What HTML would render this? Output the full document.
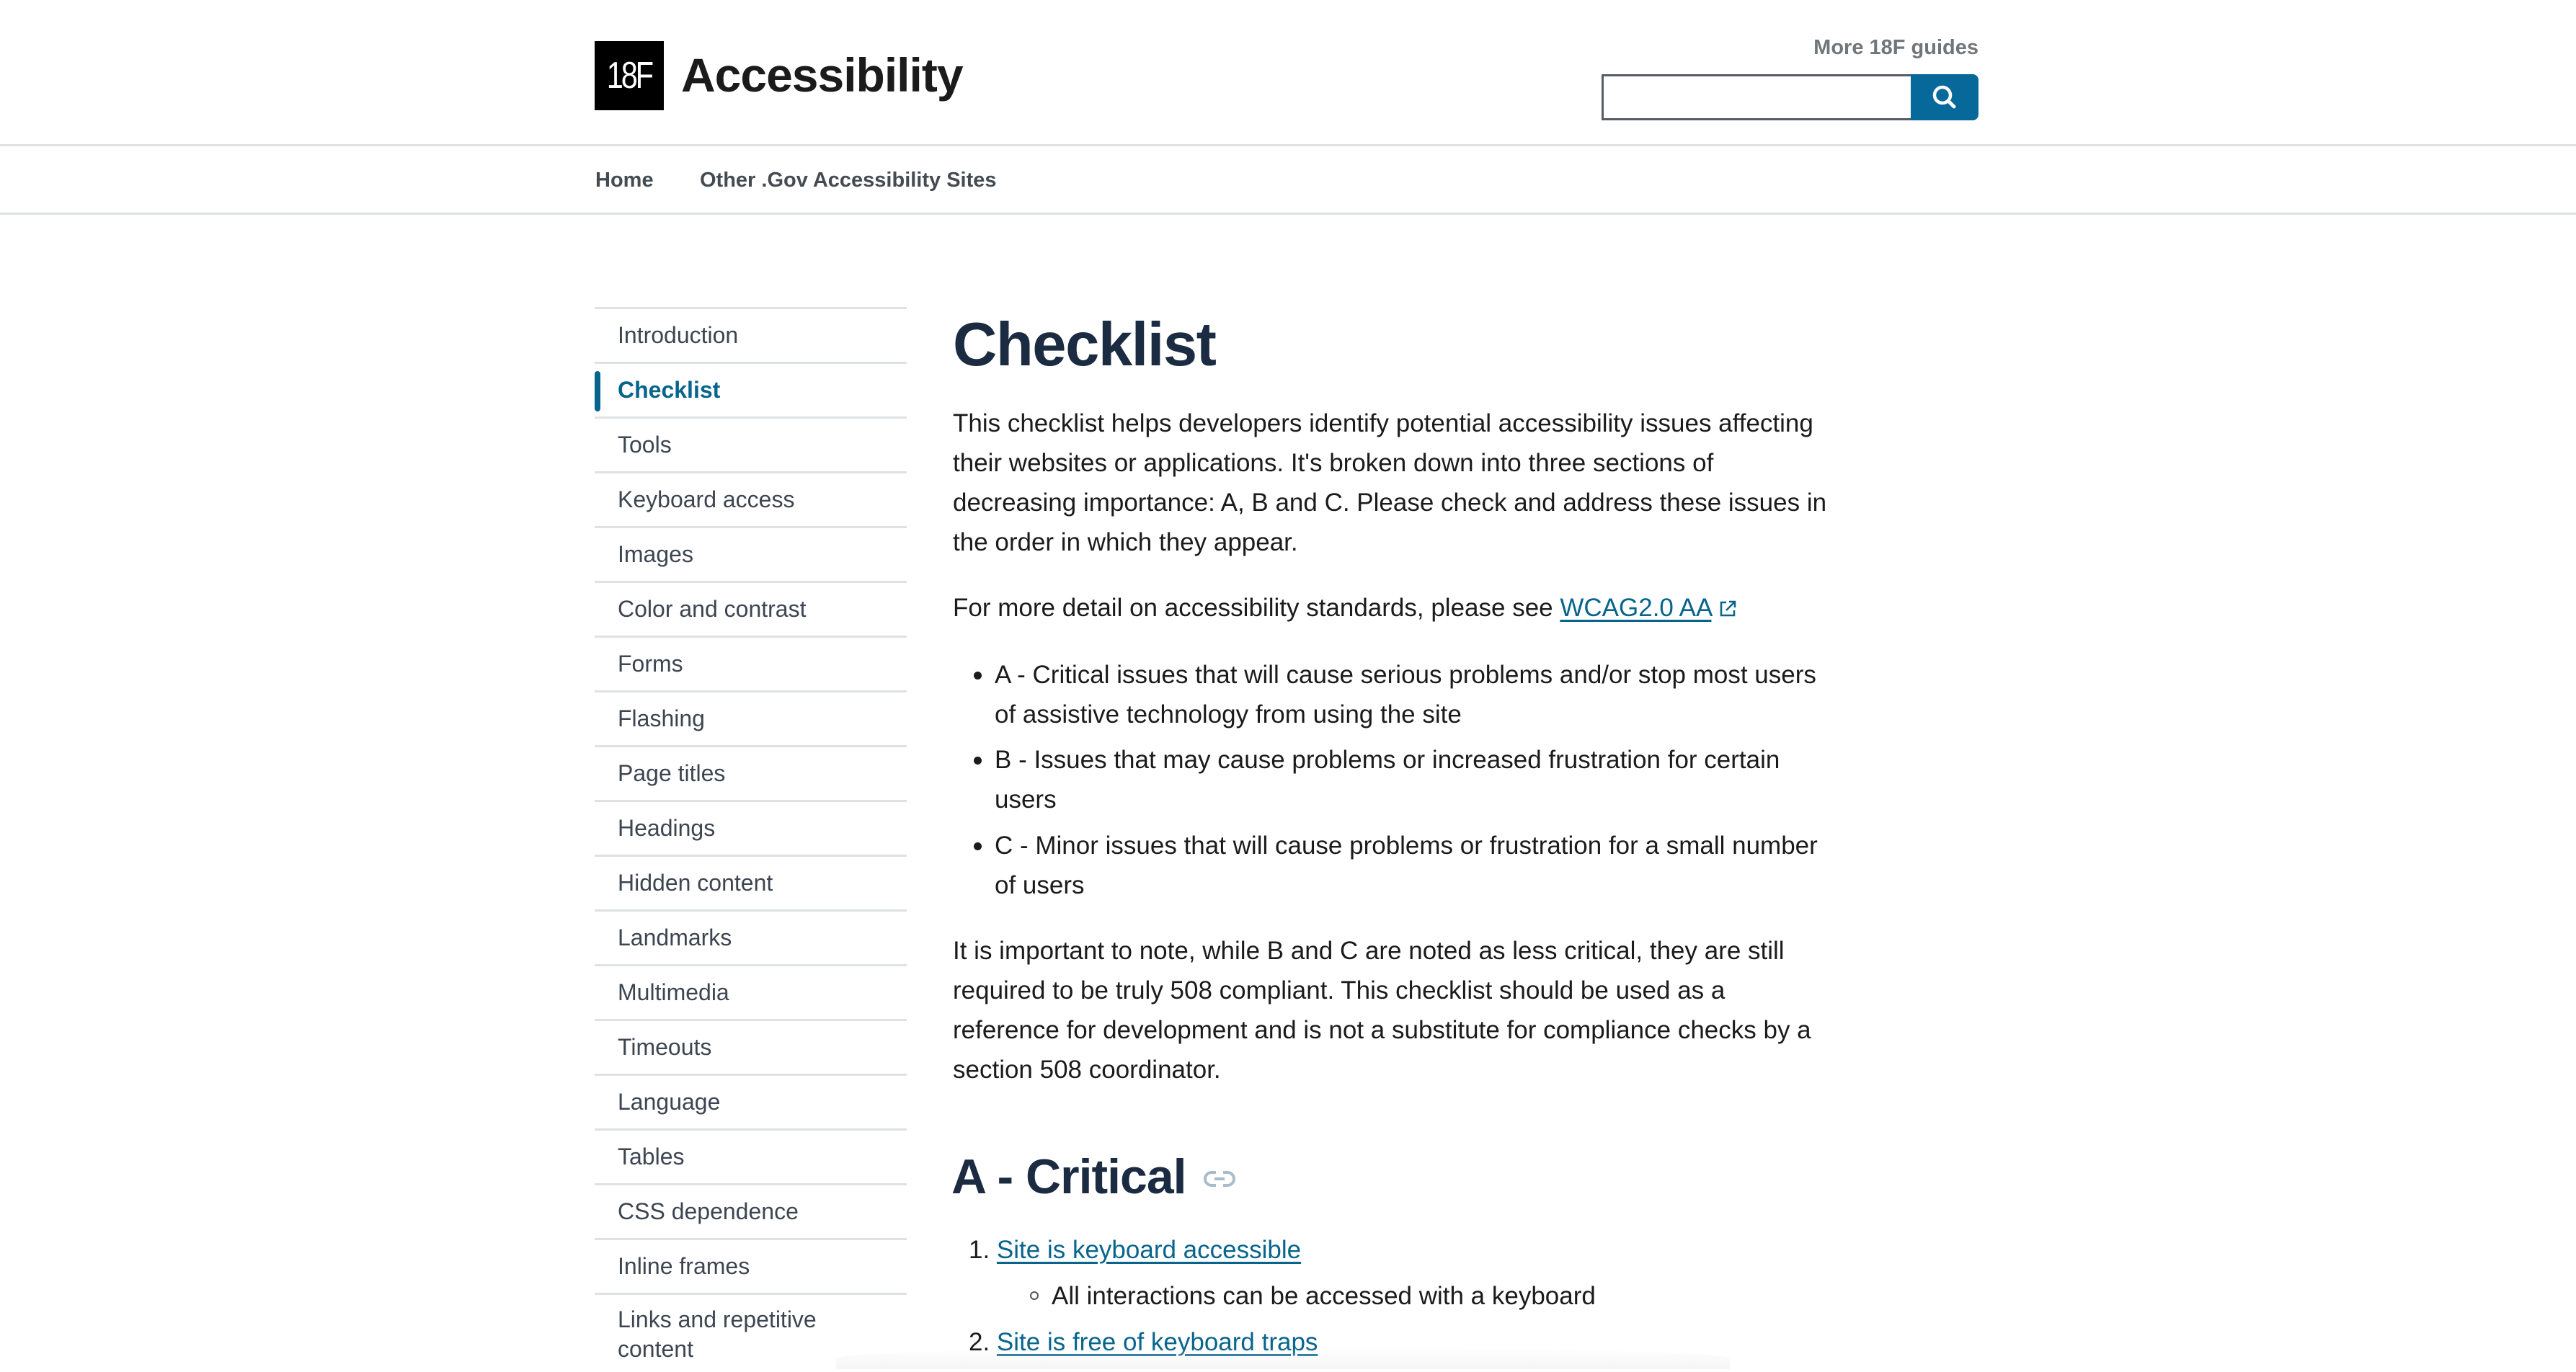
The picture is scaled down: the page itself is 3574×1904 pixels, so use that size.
<!DOCTYPE html>
<html><head><meta charset="utf-8"><style>
*{margin:0;padding:0;box-sizing:border-box}
body{width:3574px;height:1892px;overflow:hidden;background:#fff;font-family:"Liberation Sans",Arial,sans-serif;color:#1b1b1b;position:relative}
.a{position:absolute;white-space:nowrap}
.logo{left:825px;top:57px;width:96px;height:96px;background:#000;color:#fff;font-size:52px;text-align:center;line-height:96px}
.logo span{display:inline-block;transform:scaleX(.8);letter-spacing:-4px}
.title{left:945px;top:66px;font-size:66px;font-weight:bold;color:#1b1b1b;letter-spacing:-1px}
.hr{position:absolute;left:0;width:3574px;height:3px;background:#dfe1e2}
.nav{top:234px;font-size:29px;font-weight:bold;color:#454b52}
.more{right:829px;top:50px;font-size:29px;font-weight:bold;color:#71767a}
.inp{left:2222px;top:103px;width:432px;height:64px;border:3px solid #565c65}
.btn{left:2651px;top:103px;width:94px;height:64px;background:#07689a;border-radius:0 8px 8px 0}
.side{left:825px;top:426px;width:433px}
.side div{height:76px;border-top:3px solid #dfe1e2;font-size:32px;color:#3d4551;padding-left:32px;line-height:72px;position:relative}
.side div.on{color:#07648d;font-weight:bold}
.side div.on:before{content:"";position:absolute;left:0;top:10px;width:8px;height:56px;background:#07648d;border-radius:4px}
.p{left:1322px;font-size:35px;line-height:55px;color:#1b1b1b}
a{color:#07648d;text-decoration:underline;text-underline-offset:5px;text-decoration-thickness:3px}
h1{position:absolute;left:1322px;top:430px;font-size:85px;color:#1b2b41;letter-spacing:-1.5px}
h2{position:absolute;left:1320px;top:1594px;font-size:68px;color:#1b2b41;letter-spacing:-1px}
.dot{position:absolute;left:1351px;width:11px;height:11px;border-radius:50%;background:#1b1b1b}
</style></head><body>
<div class="a logo"><span>18F</span></div>
<div class="a title">Accessibility</div>
<div class="a more">More 18F guides</div>
<div class="a inp"></div>
<div class="a btn"><svg width="94" height="64" viewBox="0 0 94 64"><circle cx="44" cy="29" r="11" fill="none" stroke="#fff" stroke-width="4.5"/><line x1="52" y1="37" x2="60" y2="45" stroke="#fff" stroke-width="5" stroke-linecap="round"/></svg></div>
<div class="hr" style="top:200px"></div>
<div class="a nav" style="left:826px">Home</div>
<div class="a nav" style="left:971px">Other .Gov Accessibility Sites</div>
<div class="hr" style="top:295px"></div>

<div class="a side">
<div>Introduction</div><div class="on">Checklist</div><div>Tools</div><div>Keyboard access</div><div>Images</div><div>Color and contrast</div><div>Forms</div><div>Flashing</div><div>Page titles</div><div>Headings</div><div>Hidden content</div><div>Landmarks</div><div>Multimedia</div><div>Timeouts</div><div>Language</div><div>Tables</div><div>CSS dependence</div><div>Inline frames</div><div style="line-height:41px;padding-top:14px;height:110px">Links and repetitive<br>content</div>
</div>

<h1>Checklist</h1>
<div class="a p" style="top:560px">This checklist helps developers identify potential accessibility issues affecting<br>their websites or applications. It's broken down into three sections of<br>decreasing importance: A, B and C. Please check and address these issues in<br>the order in which they appear.</div>
<div class="a p" style="top:816px">For more detail on accessibility standards, please see <a>WCAG2.0 AA</a> <svg width="26" height="26" viewBox="0 0 26 26" style="vertical-align:-3px"><path d="M11 4H4v18h18v-7M15 3h8v8M23 3L11 15" fill="none" stroke="#07648d" stroke-width="2.5"/></svg></div>
<div class="dot" style="top:932px"></div>
<div class="a p" style="top:909px;left:1380px">A - Critical issues that will cause serious problems and/or stop most users<br>of assistive technology from using the site</div>
<div class="dot" style="top:1050px"></div>
<div class="a p" style="top:1027px;left:1380px">B - Issues that may cause problems or increased frustration for certain<br>users</div>
<div class="dot" style="top:1169px"></div>
<div class="a p" style="top:1146px;left:1380px">C - Minor issues that will cause problems or frustration for a small number<br>of users</div>
<div class="a p" style="top:1292px">It is important to note, while B and C are noted as less critical, they are still<br>required to be truly 508 compliant. This checklist should be used as a<br>reference for development and is not a substitute for compliance checks by a<br>section 508 coordinator.</div>
<h2>A - Critical</h2>
<svg class="a" style="left:1670px;top:1622px" width="44" height="28" viewBox="0 0 44 28"><path d="M17 5H11a9 9 0 0 0 0 18h6M27 5h6a9 9 0 0 1 0 18h-6M15 14h14" fill="none" stroke="#a9bccc" stroke-width="4"/></svg>
<div class="a p" style="top:1707px;left:1344px">1. <a>Site is keyboard accessible</a></div>
<div class="a" style="left:1429px;top:1792px;width:12px;height:12px;border:2px solid #555;border-radius:50%"></div>
<div class="a p" style="top:1771px;left:1459px">All interactions can be accessed with a keyboard</div>
<div class="a p" style="top:1835px;left:1344px">2. <a>Site is free of keyboard traps</a></div>
<div class="a" style="left:1160px;top:1870px;width:1240px;height:30px;background:linear-gradient(#fff0,#eee);border-radius:50% 50% 0 0;opacity:.6"></div>
</body></html>
